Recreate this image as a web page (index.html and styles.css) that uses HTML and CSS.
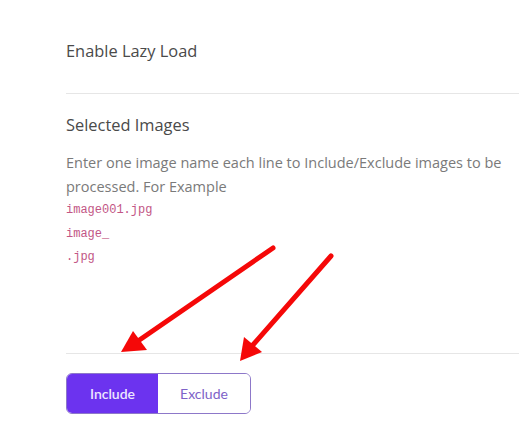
FILE: index.html
```html
<!DOCTYPE html>
<html lang="en">
<head>
<meta charset="utf-8">
<title>Lazy Load Settings</title>
<link rel="stylesheet" href="styles.css">
</head>
<body>
<div class="panel">
  <div class="row row-lazy">
    <div class="label">Enable Lazy Load</div>
  </div>
  <div class="row row-images">
    <div class="label">Selected Images</div>
    <p class="desc">Enter one image name each line to Include/Exclude images to be processed. For Example</p>
    <div class="codes">
      <code>image001.jpg</code>
      <code>image_</code>
      <code>.jpg</code>
    </div>
  </div>
  <div class="row-mode">
    <div class="toggle">
      <button class="tbtn active">Include</button>
      <button class="tbtn">Exclude</button>
    </div>
  </div>
</div>
<svg class="arrows" width="519" height="444" viewBox="0 0 519 444" aria-hidden="true">
  <g stroke="#f50808" stroke-width="5" stroke-linecap="round" fill="none">
    <line x1="273" y1="248" x2="138" y2="341"/>
    <line x1="331" y1="256" x2="252" y2="346"/>
  </g>
  <g fill="#f50808">
    <polygon points="121,352 133,331 147,350"/>
    <polygon points="240,361 244,337 262,352"/>
  </g>
</svg>
</body>
</html>
```
FILE: styles.css
```css
html, body {
  margin: 0;
  padding: 0;
  background: #ffffff;
}
body {
  font-family: "Open Sans", "Noto Sans", sans-serif;
  color: #444;
  position: relative;
  width: 519px;
  height: 444px;
  overflow: hidden;
}
.panel {
  padding-left: 66px;
}
.row {
  border-bottom: 1px solid #e6e6e6;
}
.label {
  font-size: 16.4px;
  line-height: 22px;
  color: #4a4a4a;
}
.row-lazy {
  height: 94px;
  box-sizing: border-box;
  padding-top: 40px;
}
.row-images {
  height: 260px;
  box-sizing: border-box;
  padding-top: 20px;
}
.desc {
  margin: 15px 0 0 0;
  font-size: 14.5px;
  line-height: 24px;
  color: #7a7a7a;
  padding-right: 12px;
}
.codes {
  display: flex;
  flex-direction: column;
}
.codes code {
  font-family: "Liberation Mono", "DejaVu Sans Mono", monospace;
  font-size: 12px;
  line-height: 23.5px;
  color: #c25685;
}
.row-mode {
  padding-top: 19px;
}
.toggle {
  display: inline-flex;
  border: 1px solid #8d78c9;
  border-radius: 6px;
  overflow: hidden;
  height: 41px;
  box-sizing: border-box;
}
.tbtn {
  font-family: "Lato", "Inter", sans-serif;
  font-size: 14px;
  border: none;
  background: #fff;
  color: #7e62c8;
  padding: 0;
  margin: 0;
  width: 92px;
}
.tbtn.active {
  background: #6c33ef;
  color: #ece6ff;
  font-weight: 600;
  width: 91px;
}
.arrows {
  position: absolute;
  left: 0;
  top: 0;
  pointer-events: none;
}
```
